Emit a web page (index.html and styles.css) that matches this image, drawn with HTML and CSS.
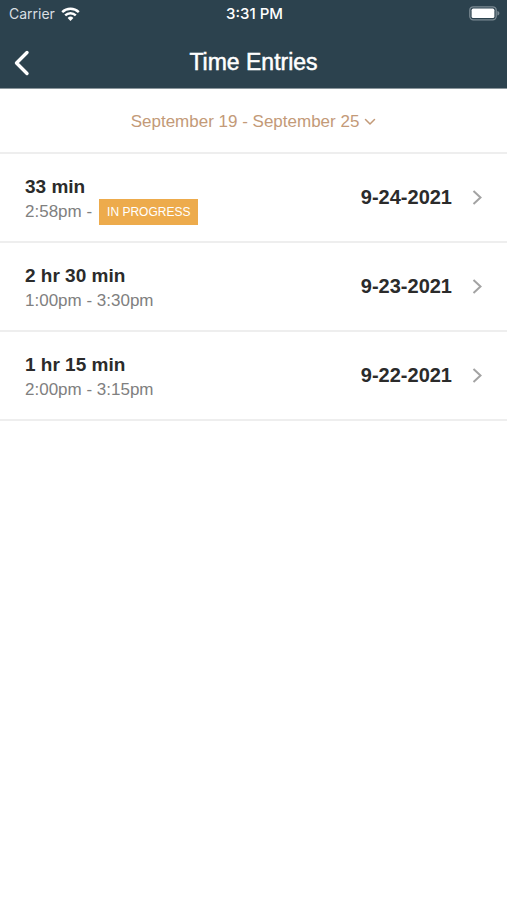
FILE: index.html
```html
<!DOCTYPE html>
<html lang="en">
<head>
    <meta charset="UTF-8">
    <meta name="viewport" content="width=device-width, initial-scale=1.0">
    <title>Time Entries</title>
    <link rel="stylesheet" href="styles.css">
</head>
<body>
    <header class="header">
        <!-- Status bar -->
        <div class="status-bar">
            <div class="carrier">
                <span>Carrier</span>
                <svg width="19" height="14" viewBox="0 0 19 14" fill="none" stroke="#fff" stroke-width="2.4">
                    <path d="M1.2 5.1a11.8 11.8 0 0 1 16.6 0"></path>
                    <path d="M4.2 8.4a7.5 7.5 0 0 1 10.6 0"></path>
                    <path d="M9.5 14L6.6 11a4.1 4.1 0 0 1 5.8 0z" fill="#fff" stroke="none"></path>
                </svg>
            </div>
            <div class="clock">3:31 PM</div>
            <div class="battery">
                <svg width="31" height="15" viewBox="0 0 31 15">
                    <rect x="0.8" y="0.8" width="26.4" height="13" rx="3.5" fill="none" stroke="#7b8a93" stroke-width="1.3"></rect>
                    <rect x="2.6" y="2.6" width="22.8" height="9.4" rx="1.6" fill="#fff"></rect>
                    <path d="M28.4 5c1.3.4 2 1.2 2 2.3s-.7 1.9-2 2.3z" fill="#7b8a93"></path>
                </svg>
            </div>
        </div>

        <!-- Navigation bar -->
        <div class="nav-bar">
            <button class="back-button" type="button" aria-label="Back">
                <svg width="16" height="26" viewBox="0 0 16 26" fill="none" stroke="#fff" stroke-width="3.4" stroke-linejoin="round" stroke-linecap="round">
                    <polyline points="13 2.5 2.5 13 13 23.5"></polyline>
                </svg>
            </button>
            <h1 class="title">Time Entries</h1>
        </div>
    </header>

    <main>
        <button class="date-range" type="button">
            <span>September 19 - September 25</span>
            <svg width="12" height="8" viewBox="0 0 12 8" fill="none" stroke="currentColor" stroke-width="1.5" stroke-linecap="round" stroke-linejoin="round">
                <polyline points="1.5 1.5 6 6 10.5 1.5"></polyline>
            </svg>
        </button>

        <ul class="entries">
            <li>
                <a class="entry" href="#">
                    <div class="entry-info">
                        <div class="duration">33 min</div>
                        <div class="times">2:58pm - <span class="badge">IN PROGRESS</span></div>
                    </div>
                    <div class="date">9-24-2021</div>
                    <svg class="chevron" width="10" height="16" viewBox="0 0 10 16">
                        <polyline points="1.5 1 8.5 7.5 1.5 14"></polyline>
                    </svg>
                </a>
            </li>
            <li>
                <a class="entry" href="#">
                    <div class="entry-info">
                        <div class="duration">2 hr 30 min</div>
                        <div class="times">1:00pm - 3:30pm</div>
                    </div>
                    <div class="date">9-23-2021</div>
                    <svg class="chevron" width="10" height="16" viewBox="0 0 10 16">
                        <polyline points="1.5 1 8.5 7.5 1.5 14"></polyline>
                    </svg>
                </a>
            </li>
            <li>
                <a class="entry" href="#">
                    <div class="entry-info">
                        <div class="duration">1 hr 15 min</div>
                        <div class="times">2:00pm - 3:15pm</div>
                    </div>
                    <div class="date">9-22-2021</div>
                    <svg class="chevron" width="10" height="16" viewBox="0 0 10 16">
                        <polyline points="1.5 1 8.5 7.5 1.5 14"></polyline>
                    </svg>
                </a>
            </li>
        </ul>
    </main>
</body>
</html>
```
FILE: styles.css
```css
* {
    box-sizing: border-box;
}

body {
    font-family: "Liberation Sans", Arial, sans-serif;
    margin: 0;
    background-color: #fff;
    color: #2b2b2b;
}

button {
    font: inherit;
    background: none;
    border: none;
    padding: 0;
    cursor: pointer;
}

svg {
    display: block;
}

/* Header */
.header {
    background-color: #2c424e;
    color: #fff;
    border-bottom: 1px solid #8b969c;
}

.status-bar {
    display: grid;
    grid-template-columns: 1fr auto 1fr;
    align-items: center;
    height: 27px;
    padding: 0 7px 0 9px;
    font-family: Inter, sans-serif;
    font-size: 14px;
}

.carrier {
    display: flex;
    align-items: center;
    gap: 6px;
    color: #d9dfe2;
}

.clock {
    font-size: 15px;
    font-weight: 500;
}

.battery {
    justify-self: end;
}

.nav-bar {
    display: grid;
    grid-template-columns: 1fr auto 1fr;
    align-items: center;
    height: 61px;
    padding: 10px 14px 0;
}

.back-button {
    justify-self: start;
}

.title {
    margin: 0;
    font-size: 23px;
    font-weight: 400;
    -webkit-text-stroke: 0.5px #fff;
}

/* Date range picker */
.date-range {
    display: flex;
    justify-content: center;
    align-items: center;
    gap: 5px;
    width: 100%;
    height: 65px;
    padding-top: 3px;
    border-bottom: 2px solid #eee;
    color: #c39a78;
    font-size: 17px;
}

/* Entries */
.entries {
    list-style: none;
    margin: 0;
    padding: 0;
}

.entry {
    display: flex;
    align-items: center;
    height: 89px;
    padding: 0 25px;
    border-bottom: 2px solid #eee;
    color: inherit;
    text-decoration: none;
}

.entry-info {
    flex: 1;
    padding-top: 5px;
}

.duration {
    font-size: 19px;
    font-weight: 700;
    line-height: 24px;
}

.times {
    display: flex;
    align-items: center;
    gap: 7px;
    height: 27px;
    color: #808080;
    font-size: 17px;
}

.badge {
    padding: 0 8px;
    background-color: #edab4c;
    color: #fff;
    font-size: 12px;
    line-height: 26px;
}

.date {
    font-size: 20px;
    font-weight: 700;
}

.chevron {
    margin-left: 20px;
    fill: none;
    stroke: #a3a3a3;
    stroke-width: 2;
}
```
